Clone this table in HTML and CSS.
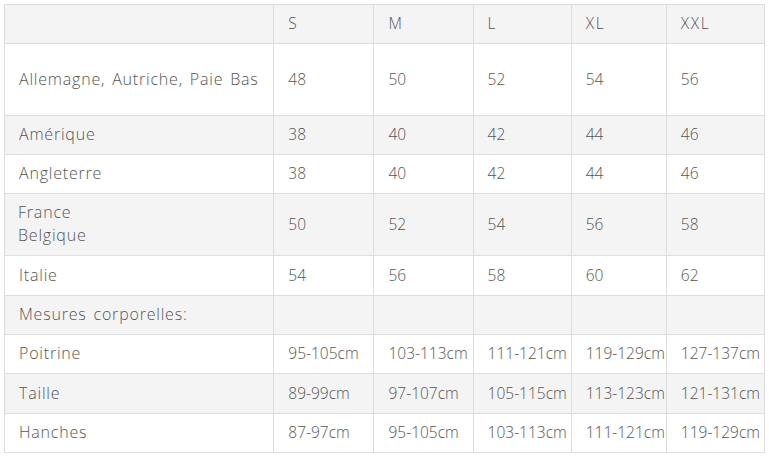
FILE: index.html
```html
<!DOCTYPE html>
<html lang="fr">
<head>
<meta charset="utf-8">
<title>Guide des tailles</title>
<link rel="stylesheet" href="styles.css">
</head>
<body>
<div class="wrap">
<table class="sizes">
<colgroup>
<col class="c-label"><col class="c-s"><col class="c-m"><col class="c-l"><col class="c-xl"><col class="c-xxl">
</colgroup>
<tbody>
<tr class="r-head"><td class="lbl"></td><td>S</td><td>M</td><td>L</td><td>XL</td><td>XXL</td></tr>
<tr class="r-tall"><td class="lbl">Allemagne, Autriche, Paie Bas</td><td>48</td><td>50</td><td>52</td><td>54</td><td>56</td></tr>
<tr><td class="lbl">Amérique</td><td>38</td><td>40</td><td>42</td><td>44</td><td>46</td></tr>
<tr><td class="lbl">Angleterre</td><td>38</td><td>40</td><td>42</td><td>44</td><td>46</td></tr>
<tr class="r-double"><td class="lbl">France<br>Belgique</td><td>50</td><td>52</td><td>54</td><td>56</td><td>58</td></tr>
<tr class="r-plus"><td class="lbl">Italie</td><td>54</td><td>56</td><td>58</td><td>60</td><td>62</td></tr>
<tr><td class="lbl">Mesures corporelles:</td><td></td><td></td><td></td><td></td><td></td></tr>
<tr><td class="lbl">Poitrine</td><td>95-105cm</td><td>103-113cm</td><td>111-121cm</td><td>119-129cm</td><td>127-137cm</td></tr>
<tr class="r-plus"><td class="lbl">Taille</td><td>89-99cm</td><td>97-107cm</td><td>105-115cm</td><td>113-123cm</td><td>121-131cm</td></tr>
<tr><td class="lbl">Hanches</td><td>87-97cm</td><td>95-105cm</td><td>103-113cm</td><td>111-121cm</td><td>119-129cm</td></tr>
</tbody>
</table>
</div>
</body>
</html>
```

FILE: styles.css
```css
html, body {
  margin: 0;
  padding: 0;
  background: #ffffff;
}
.wrap {
  padding: 4px;
}
.sizes {
  border-collapse: collapse;
  table-layout: fixed;
  width: 761px;
  font-family: "Open Sans", "DejaVu Sans", sans-serif;
  font-weight: 300;
  font-size: 15.5px;
  line-height: 23px;
  color: #555555;
}
.c-label { width: 269px; }
.c-s { width: 100px; }
.c-m { width: 99px; }
.c-l { width: 98px; }
.c-xl { width: 95px; }
.c-xxl { width: 98px; }
.sizes td {
  border: 1px solid #dddddd;
  padding: 0 0 1px 14px;
  height: 37px;
  vertical-align: middle;
  white-space: nowrap;
  overflow: hidden;
}
.sizes td.lbl {
  font-size: 16px;
  letter-spacing: 0.8px;
  word-spacing: 2px;
}
.sizes tr.r-head td {
  letter-spacing: 1.6px;
}
.sizes tr:nth-child(odd) td {
  background: #f4f4f4;
}
.sizes tr.r-tall td {
  height: 70px;
}
.sizes tr.r-double td {
  height: 60px;
}
.sizes tr.r-plus td {
  height: 38px;
}
.sizes tr.r-double td.lbl {
  padding-left: 13px;
}
```
